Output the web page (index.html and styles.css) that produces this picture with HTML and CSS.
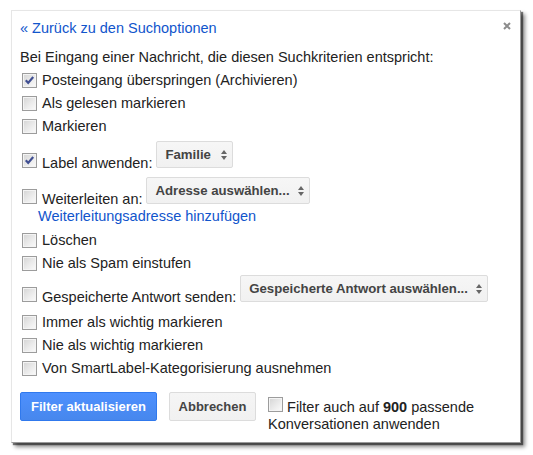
FILE: index.html
```html
<!DOCTYPE html>
<html lang="de">
<head>
<meta charset="utf-8">
<title>Filter bearbeiten</title>
<link rel="stylesheet" href="styles.css">
</head>
<body>
<div class="frame">
<div class="dialog">
  <span class="close" title="Schließen">
    <svg width="8" height="8" viewBox="0 0 8 8"><path d="M1 1L7 7M7 1L1 7" stroke="#8c8c8c" stroke-width="2" fill="none"/></svg>
  </span>
  <a class="back" href="#">« Zurück zu den Suchoptionen</a>
  <p class="intro">Bei Eingang einer Nachricht, die diesen Suchkriterien entspricht:</p>

  <div class="options">
    <label class="row"><span class="cb checked"></span>Posteingang überspringen (Archivieren)</label>
    <label class="row"><span class="cb"></span>Als gelesen markieren</label>
    <label class="row"><span class="cb"></span>Markieren</label>

    <div class="row row-select first-select">
      <span class="cb checked"></span><span class="txt">Label anwenden:</span>
      <span class="select select-label">Familie<i class="arrows"></i></span>
    </div>

    <div class="row row-select forward">
      <span class="cb"></span><span class="txt">Weiterleiten an:</span>
      <span class="select">Adresse auswählen...<i class="arrows"></i></span>
    </div>
    <a class="add-address" href="#">Weiterleitungsadresse hinzufügen</a>

    <label class="row after-link"><span class="cb"></span>Löschen</label>
    <label class="row"><span class="cb"></span>Nie als Spam einstufen</label>

    <div class="row row-select canned">
      <span class="cb"></span><span class="txt">Gespeicherte Antwort senden:</span>
      <span class="select">Gespeicherte Antwort auswählen...<i class="arrows"></i></span>
    </div>

    <label class="row after-canned"><span class="cb"></span>Immer als wichtig markieren</label>
    <label class="row"><span class="cb"></span>Nie als wichtig markieren</label>
    <label class="row"><span class="cb"></span>Von SmartLabel-Kategorisierung ausnehmen</label>
  </div>

  <div class="actions">
    <button class="btn btn-primary" type="button">Filter aktualisieren</button>
    <button class="btn" type="button">Abbrechen</button>
    <p class="apply-all"><span class="cb"></span> Filter auch auf <b>900</b> passende Konversationen anwenden</p>
  </div>
</div>
</div>
</body>
</html>
```
FILE: styles.css
```css
html, body {
  margin: 0;
  background: #fff;
}
body {
  font-family: "Liberation Sans", Arial, sans-serif;
  font-size: 14.5px;
  color: #222;
}

.frame {
  width: 533px;
  height: 455px;
  padding: 10px 0 0 11px;
  box-sizing: border-box;
  overflow: hidden;
}

.dialog {
  position: relative;
  box-sizing: border-box;
  width: 510px;
  height: 433px;
  padding: 8px 9px 0 8px;
  background: #fff;
  border-top: 1px solid #e6e6e6;
  border-left: 1px solid #e6e6e6;
  border-right: 1px solid #9a9a9a;
  border-bottom: 1px solid #9a9a9a;
  box-shadow: 2px 2px 1px rgba(0, 0, 0, 0.5), 4px 4px 4px rgba(0, 0, 0, 0.45);
}

.close {
  position: absolute;
  top: 11px;
  right: 9px;
  width: 8px;
  height: 8px;
  line-height: 0;
  cursor: pointer;
}

a {
  color: #15c;
  text-decoration: none;
}

.back {
  display: block;
  line-height: 18px;
}

.intro {
  margin: 11px 0 0;
  line-height: 18px;
}

.options {
  margin-top: 3px;
}

.row {
  display: flex;
  align-items: center;
  height: 23px;
  line-height: 23px;
}

/* rows holding a dropdown: text baseline sits on the dropdown's bottom edge */
.row-select {
  align-items: flex-end;
  height: auto;
  line-height: 18px;
}
.row-select .txt {
  margin-bottom: -4px;
}
.first-select { margin-top: 3px; }
.forward { margin-top: 9px; }
.canned { margin-top: 0; }
.after-link { margin-top: 4px; }
.after-canned { margin-top: 9px; }

/* classic bevelled checkbox */
.cb {
  display: inline-block;
  flex: none;
  box-sizing: border-box;
  width: 15px;
  height: 15px;
  margin: 0 5px 0 2px;
  border: 1px solid #9c9c9c;
  background: linear-gradient(135deg, #d4d4d4 0%, #ebebeb 55%, #fbfbfb 100%);
  box-shadow: inset 0 0 0 1px #f4f4f4;
}
.cb.checked {
  background-image:
    url("data:image/svg+xml,%3Csvg xmlns='http://www.w3.org/2000/svg' width='13' height='13' viewBox='0 0 13 13'%3E%3Cpath d='M2.8 6.2L5.2 8.9L10.2 3' fill='none' stroke='%23404f92' stroke-width='2.2'/%3E%3C/svg%3E"),
    linear-gradient(135deg, #d4d4d4 0%, #ebebeb 55%, #fbfbfb 100%);
  background-repeat: no-repeat;
  background-position: center;
}

.select {
  position: relative;
  display: inline-block;
  box-sizing: border-box;
  height: 27px;
  margin-left: 4px;
  padding: 0 19px 0 8px;
  line-height: 25px;
  font-size: 13.2px;
  font-weight: bold;
  color: #444;
  background: linear-gradient(#f6f6f6, #f1f1f1);
  border: 1px solid #dcdcdc;
  border-radius: 2px;
}
.select-label {
  min-width: 77px;
}
.arrows {
  position: absolute;
  right: 4px;
  top: 8px;
  width: 7px;
  height: 10px;
}
.arrows::before,
.arrows::after {
  content: "";
  position: absolute;
  left: 0;
  border-left: 3.5px solid transparent;
  border-right: 3.5px solid transparent;
}
.arrows::before {
  top: 0;
  border-bottom: 4px solid #666;
}
.arrows::after {
  bottom: 0;
  border-top: 4px solid #666;
}

.add-address {
  display: block;
  margin: 3px 0 0 18px;
  line-height: 18px;
}

.actions {
  display: flex;
  align-items: flex-start;
  margin-top: 12px;
}

.btn {
  box-sizing: border-box;
  height: 29px;
  padding: 0 8px;
  margin-right: 12px;
  font-family: "Liberation Sans", Arial, sans-serif;
  font-size: 13px;
  font-weight: bold;
  color: #444;
  background: linear-gradient(#f5f5f5, #f1f1f1);
  border: 1px solid #dcdcdc;
  border-radius: 2px;
}
.btn-primary {
  width: 137px;
  margin-right: 12px;
  color: #fff;
  background: linear-gradient(#4d90fe, #4787ed);
  border-color: #3079ed;
}
.btn + .btn {
  width: 87px;
}

.apply-all {
  margin: 5px 0 0 0;
  line-height: 17px;
  width: 236px;
}
.apply-all .cb {
  margin: 0;
  vertical-align: baseline;
}
.apply-all b {
  color: #222;
}
```
